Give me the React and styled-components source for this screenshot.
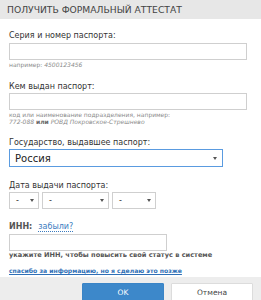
import React from "react"
import styled, { createGlobalStyle } from "styled-components"

const GlobalStyle = createGlobalStyle`
  html, body {
    margin: 0;
    padding: 0;
    background: #fff;
  }
  body {
    font-family: "DejaVu Sans", Verdana, sans-serif;
  }
`

const Dialog = styled.div`
  width: 261px;
  height: 300px;
  overflow: hidden;
  display: flex;
  flex-direction: column;
  background: #fff;
`

const Header = styled.h2`
  margin: 0;
  height: 19px;
  line-height: 20px;
  padding-left: 7px;
  background: #e7e7e7;
  color: #444;
  font-size: 9.2px;
  font-weight: normal;
  text-transform: uppercase;
  white-space: nowrap;
`

const Body = styled.div`
  display: flex;
  flex-direction: column;
  padding: 0 9px;
`

const Field = styled.div`
  display: flex;
  flex-direction: column;
  margin-top: ${props => props.gap || 13}px;
`

const Label = styled.label`
  font-size: 8px;
  line-height: 10px;
  color: #333;
  margin-bottom: ${props => props.space || 1}px;
  white-space: nowrap;
`

const Input = styled.div`
  box-sizing: border-box;
  width: ${props => props.width}px;
  height: 17px;
  border: 1px solid #cfcfcf;
  background: #fff;
`

const Hint = styled.div`
  margin-top: 1px;
  font-size: ${props => (props.strong ? 6.6 : 6)}px;
  line-height: 7px;
  color: ${props => (props.strong ? "#555" : "#8a8a8a")};
  white-space: nowrap;
  font-weight: ${props => (props.strong ? "bold" : "normal")};
  i {
    font-style: italic;
  }
  b {
    color: #666;
  }
`

const Select = styled.div`
  box-sizing: border-box;
  width: ${props => props.width}px;
  height: ${props => props.h || 17}px;
  border: 1px solid ${props => (props.active ? "#5a9be0" : "#cfcfcf")};
  display: flex;
  align-items: center;
  justify-content: space-between;
  padding: 0 ${props => (props.active ? 5 : 4)}px 0 ${props => (props.active ? 5 : 6)}px;
  font-size: ${props => (props.active ? 10 : 8)}px;
  color: #222;
  background: #fff;
`

const Arrow = styled.span`
  width: 0;
  height: 0;
  border-left: 2px solid transparent;
  border-right: 2px solid transparent;
  border-top: 3px solid #555;
`

const DateRow = styled.div`
  display: flex;
  gap: 3px;
`

const InnLabel = styled.div`
  display: flex;
  align-items: baseline;
  gap: 6px;
  font-size: 8px;
  line-height: 10px;
  margin-bottom: 2px;
  b {
    color: #555;
  }
`

const DottedLink = styled.a`
  color: #3b7cc0;
  text-decoration: none;
  border-bottom: 1px dotted #3b7cc0;
  line-height: 9px;
`

const LaterLink = styled.a`
  margin-top: 7px;
  font-size: 6.1px;
  line-height: 10px;
  font-weight: bold;
  color: #2f6fb6;
  text-decoration: underline;
  white-space: nowrap;
`

const Footer = styled.div`
  margin-top: auto;
  height: 23px;
  background: #ededed;
  display: flex;
  justify-content: flex-end;
  align-items: flex-start;
  gap: 7px;
  padding: 6px 8px 0 0;
  box-sizing: border-box;
`

const Button = styled.button`
  width: 82px;
  height: 22px;
  flex-shrink: 0;
  box-sizing: border-box;
  border: 1px solid ${props => (props.primary ? "#3a84c6" : "#dcdcdc")};
  background: ${props => (props.primary ? "#3d88ca" : "#fff")};
  color: ${props => (props.primary ? "#fff" : "#444")};
  font-family: "DejaVu Sans", Verdana, sans-serif;
  font-size: 7.5px;
  padding: 0 0 4px;
  border-radius: 1px;
`

const App = () => {
  return (
    <>
      <GlobalStyle />
      <Dialog>
        <Header>Получить формальный аттестат</Header>
        <Body>
          <Field gap={12}>
            <Label space={2}>Серия и номер паспорта:</Label>
            <Input width={238} />
            <Hint>
              например: <i>4500123456</i>
            </Hint>
          </Field>
          <Field gap={14}>
            <Label>Кем выдан паспорт:</Label>
            <Input width={238} />
            <Hint>
              код или наименование подразделения, например:
              <br />
              <i>772-088</i> <b>или</b> <i>РОВД Покровское-Стрешнево</i>
            </Hint>
          </Field>
          <Field gap={13}>
            <Label space={0}>Государство, выдавшее паспорт:</Label>
            <Select width={214} h={18} active>
              Россия
              <Arrow />
            </Select>
          </Field>
          <Field gap={14}>
            <Label space={0}>Дата выдачи паспорта:</Label>
            <DateRow>
              <Select width={30}>
                -<Arrow />
              </Select>
              <Select width={67}>
                -<Arrow />
              </Select>
              <Select width={44}>
                -<Arrow />
              </Select>
            </DateRow>
          </Field>
          <Field gap={13}>
            <InnLabel>
              <b>ИНН:</b>
              <DottedLink href="#">забыли?</DottedLink>
            </InnLabel>
            <Input width={158} />
            <Hint strong>укажите ИНН, чтобы повысить свой статус в системе</Hint>
            <LaterLink href="#">спасибо за информацию, но я сделаю это позже</LaterLink>
          </Field>
        </Body>
        <Footer>
          <Button primary>OK</Button>
          <Button>Отмена</Button>
        </Footer>
      </Dialog>
    </>
  )
}

export default App
